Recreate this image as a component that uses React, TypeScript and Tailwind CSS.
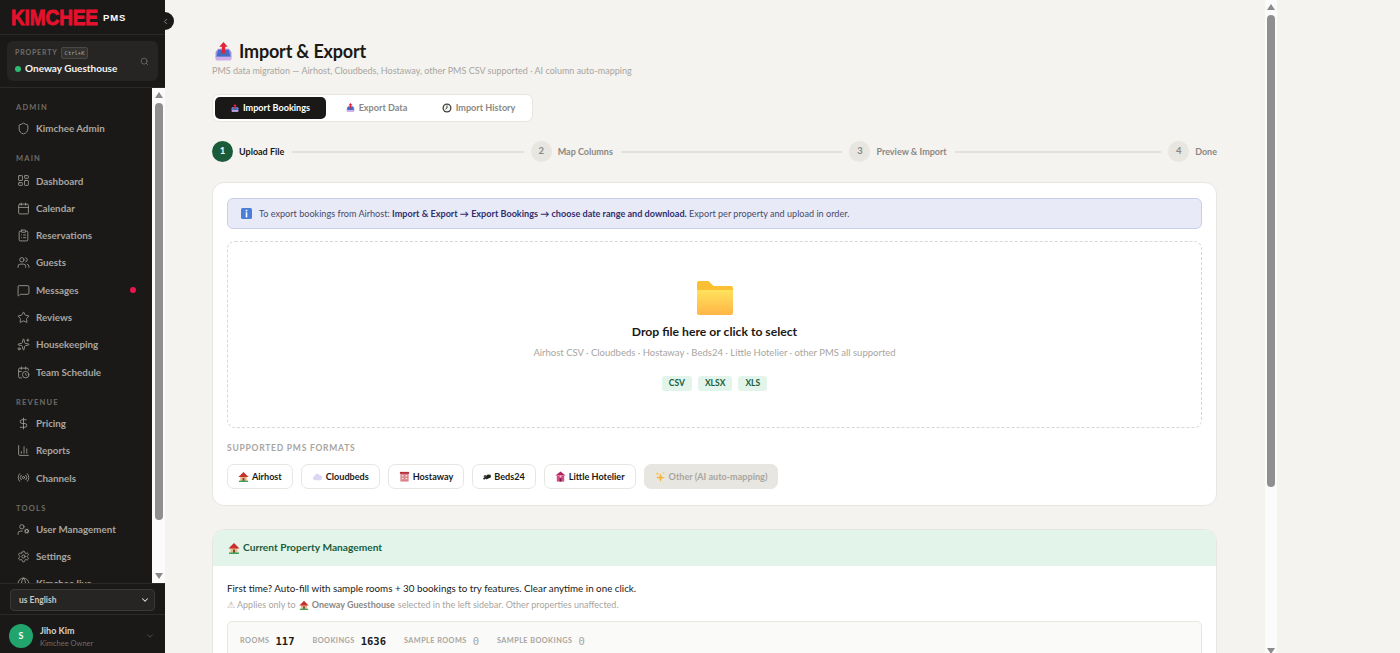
import type { ReactNode } from "react";
import {
  CalendarClock,
  Calendar,
  ChartColumn,
  ChevronDown,
  ChevronLeft,
  ClipboardList,
  DollarSign,
  Globe,
  LayoutDashboard,
  MessageSquare,
  Radio,
  Search,
  Settings,
  Shield,
  Sparkles,
  Star,
  UserCog,
  Users,
} from "lucide-react";

const FONT = "font-['Lato','Noto_Sans',sans-serif]";

function OutboxEmoji({ size = 18 }: { size?: number }) {
  return (
    <svg width={size} height={size} viewBox="0 0 18 18" className="shrink-0">
      <path d="M1.500 9.500 4 6.500h10l2.500 3V15a2 2 0 0 1-2 2h-11a2 2 0 0 1-2-2z" fill="#9a8fdd" />
      <path d="M4 7.500h10L15.500 14h-13z" fill="#3f6fc4" />
      <path d="M1.500 14h15v2a1.500 1.500 0 0 1-1.500 1.500H3A1.500 1.500 0 0 1 1.500 16z" fill="#cdaeea" />
      <path d="M9 0 13 4.500h-2.400V11H7.400V4.500H5z" fill="#e0243c" />
    </svg>
  );
}

function HouseEmoji({ size = 11 }: { size?: number }) {
  return (
    <svg width={size} height={size} viewBox="0 0 12 12" className="shrink-0">
      <rect x="2.500" y="6" width="7" height="5" fill="#e8b98c" />
      <rect x="5" y="7.500" width="2" height="3.500" fill="#7a4a2a" />
      <path d="M6 1 .5 6.500h11z" fill="#c9302c" />
      <rect x="1" y="10.500" width="10" height="1.500" fill="#3fa45b" />
    </svg>
  );
}

function CloudEmoji() {
  return (
    <svg width="11" height="11" viewBox="0 0 12 12" className="shrink-0">
      <path d="M3 10a2.300 2.300 0 0 1-.3-4.500 3 3 0 0 1 5.700-.8A2.700 2.700 0 0 1 9.300 10z" fill="#dcd6f2" />
    </svg>
  );
}

function HotelEmoji() {
  return (
    <svg width="11" height="11" viewBox="0 0 12 12" className="shrink-0">
      <rect x="1.500" y="1" width="9" height="10.500" fill="#d9828a" />
      <rect x="1" y="1" width="10" height="2" fill="#b5303c" />
      <rect x="3" y="4.500" width="2" height="1.500" fill="#f6e3d8" />
      <rect x="7" y="4.500" width="2" height="1.500" fill="#f6e3d8" />
      <rect x="3" y="7.500" width="2" height="1.500" fill="#f6e3d8" />
      <rect x="7" y="7.500" width="2" height="1.500" fill="#f6e3d8" />
    </svg>
  );
}

function BedEmoji() {
  return (
    <svg width="8" height="11" viewBox="0 0 12 16" className="shrink-0">
      <path d="M0 11 7 5l4.500.5L12 9l-7 3.500L4.500 11 1.500 13z" fill="#22221f" />
      <circle cx="3" cy="7.500" r="1.800" fill="#4a4a46" />
    </svg>
  );
}

function LoveHotelEmoji() {
  return (
    <svg width="11" height="11" viewBox="0 0 12 12" className="shrink-0">
      <path d="M6 .5 11.500 5H.5z" fill="#b3235f" />
      <rect x="2" y="5" width="8" height="6.500" fill="#d84a86" />
      <rect x="5" y="8" width="2" height="3.500" fill="#6e2346" />
      <circle cx="6" cy="6" r="1" fill="#ffd0e0" />
    </svg>
  );
}

function SparklesEmoji() {
  return (
    <svg width="11" height="11" viewBox="0 0 12 12" className="shrink-0">
      <path d="M6 2.500 7.200 6 11 7.200 7.200 8.400 6 12 4.800 8.400 1 7.200 4.800 6z" fill="#f3b93f" />
      <path d="M2.500 .5 3.200 2.300 5 3 3.200 3.700 2.500 5.500 1.800 3.700 0 3 1.800 2.300z" fill="#f7cf6b" />
      <path d="M9.500 0 10 1.500 11.500 2 10 2.500 9.500 4 9 2.500 7.500 2 9 1.500z" fill="#f7cf6b" />
    </svg>
  );
}

function HistoryEmoji() {
  return (
    <svg width="10" height="10" viewBox="0 0 10 10" className="shrink-0">
      <circle cx="5" cy="5" r="4.500" fill="#44423f" />
      <circle cx="5" cy="5" r="3.200" fill="#f4f3ef" />
      <path d="M5 2.500V5L3.500 6.200" stroke="#44423f" strokeWidth="1" fill="none" />
    </svg>
  );
}

function InfoEmoji() {
  return (
    <svg width="11" height="11" viewBox="0 0 11 11" className="shrink-0">
      <rect width="11" height="11" rx="1.500" fill="#4a7fd9" />
      <rect x="4.700" y="1.800" width="1.600" height="1.600" fill="#fff" />
      <rect x="4.700" y="4.300" width="1.600" height="5" fill="#fff" />
    </svg>
  );
}

function FolderEmoji() {
  return (
    <svg width="38" height="36" viewBox="0 0 38 36" className="shrink-0">
      <defs>
        <linearGradient id="folder-front" x1="0" y1="0" x2="0" y2="1">
          <stop offset="0" stopColor="#ffe25c" />
          <stop offset="1" stopColor="#ffb547" />
        </linearGradient>
      </defs>
      <path d="M1 3a2 2 0 0 1 2-2h9.500l5 5H35a2 2 0 0 1 2 2v6H1z" fill="#fbbf34" />
      <path d="M1 10h36v23a2 2 0 0 1-2 2H3a2 2 0 0 1-2-2z" fill="url(#folder-front)" />
    </svg>
  );
}

function ScrollColumn({ thumbTop, thumbHeight, width, arrowBottom }: { thumbTop: string; thumbHeight: string; width: string; arrowBottom: string }) {
  return (
    <div className={`${width} bg-[#fbfbfb] shrink-0 h-full flex flex-col items-center`}>
      <div className="w-0 h-0 mt-[4px] border-x-[4.500px] border-x-transparent border-b-[6px] border-b-[#8a8a8a]" />
      <div className={`${thumbTop} ${thumbHeight} w-[8px] rounded-full bg-[#8f8f8f]`} />
      <div className="flex-1" />
      <div className={`${arrowBottom} w-0 h-0 border-x-[4.500px] border-x-transparent border-t-[6px] border-t-[#8a8a8a]`} />
    </div>
  );
}

function SectionLabel({ children, className }: { children: ReactNode; className: string }) {
  return <div className={`${className} pl-[16px] text-[7.500px] leading-[10px] font-bold tracking-[0.16em] text-[#6e6c68]`}>{children}</div>;
}

function NavItem({ icon, label, dot }: { icon: ReactNode; label: string; dot?: boolean }) {
  return (
    <div className="h-[27.300px] flex items-center pl-[17px] pr-[16px] text-[#a8a5a0]">
      <span className="w-[19px] shrink-0 flex">{icon}</span>
      <span className="text-[9.800px] font-bold whitespace-nowrap">{label}</span>
      {dot && <span className="ml-auto w-[6px] h-[6px] rounded-full bg-[#e8174f]" />}
    </div>
  );
}

function Sidebar() {
  const ic = { size: 13, strokeWidth: 1.5 };
  return (
    <aside className="relative w-[165px] shrink-0 h-full bg-[#1a1917] flex flex-col">
      <div className="h-[35px] shrink-0 flex items-center pl-[11px] gap-[5px] border-b border-[#2b2a27]">
        <span className="inline-block scale-y-[1.12] font-['Liberation_Sans',sans-serif] font-bold text-[19px] leading-none tracking-[-0.1px] text-[#e8112d] [-webkit-text-stroke:0.7px_#e8112d]">KIMCHEE</span>
        <span className="font-['Liberation_Sans',sans-serif] font-bold text-[9.500px] tracking-[0.1em] text-white mt-[2px]">PMS</span>
      </div>
      <div className="h-[53px] shrink-0 px-[7px] pt-[6px] border-b border-[#2b2a27]">
        <div className="h-[40px] rounded-[6px] bg-[#262523] pl-[8px] pr-[9px] flex items-center justify-between">
          <div>
            <div className="flex items-center gap-[3px] h-[13px]">
              <span className="text-[7px] font-bold tracking-[0.12em] text-[#6e6c68]">PROPERTY</span>
              <span className="rounded-[2px] border border-[#4a4845] bg-[#33322f] px-[3px] font-['DejaVu_Sans_Mono',monospace] text-[5.500px] leading-[10px] text-[#a8a5a0]">Ctrl+K</span>
            </div>
            <div className="flex items-center gap-[4px] mt-[2px]">
              <span className="w-[6px] h-[6px] rounded-full bg-[#2dbb73]" />
              <span className="text-[10px] font-bold text-[#f5f4f0] whitespace-nowrap">Oneway Guesthouse</span>
            </div>
          </div>
          <Search size={9} strokeWidth={1.5} className="text-[#8a8884]" />
        </div>
      </div>
      <div className="flex-1 min-h-0 flex">
        <nav className="flex-1 min-w-0 overflow-hidden">
          <SectionLabel className="mt-[15px]">ADMIN</SectionLabel>
          <div className="mt-[2px]"><NavItem icon={<Shield {...ic} />} label="Kimchee Admin" /></div>
          <SectionLabel className="mt-[12px]">MAIN</SectionLabel>
          <div className="mt-[3px]">
            <NavItem icon={<LayoutDashboard {...ic} />} label="Dashboard" />
            <NavItem icon={<Calendar {...ic} />} label="Calendar" />
            <NavItem icon={<ClipboardList {...ic} />} label="Reservations" />
            <NavItem icon={<Users {...ic} />} label="Guests" />
            <NavItem icon={<MessageSquare {...ic} />} label="Messages" dot />
            <NavItem icon={<Star {...ic} />} label="Reviews" />
            <NavItem icon={<Sparkles {...ic} />} label="Housekeeping" />
            <NavItem icon={<CalendarClock {...ic} />} label="Team Schedule" />
          </div>
          <SectionLabel className="mt-[12px]">REVENUE</SectionLabel>
          <div className="mt-[2px]">
            <NavItem icon={<DollarSign {...ic} />} label="Pricing" />
            <NavItem icon={<ChartColumn {...ic} />} label="Reports" />
            <NavItem icon={<Radio {...ic} />} label="Channels" />
          </div>
          <SectionLabel className="mt-[12px]">TOOLS</SectionLabel>
          <div className="mt-[2px]">
            <NavItem icon={<UserCog {...ic} />} label="User Management" />
            <NavItem icon={<Settings {...ic} />} label="Settings" />
            <NavItem icon={<Globe {...ic} />} label="Kimchee live" />
          </div>
        </nav>
        <ScrollColumn width="w-[13px]" thumbTop="mt-[5px]" thumbHeight="h-[417px]" arrowBottom="mb-[4px]" />
      </div>
      <div className="h-[31px] shrink-0 px-[10px] pt-[5px] border-t border-[#2b2a27]">
        <div className="h-[22px] rounded-[4px] border border-[#3a3936] bg-[#262523] pl-[8px] pr-[4px] flex items-center justify-between">
          <span className="text-[8.500px] font-bold text-[#c9c6c0]">us English</span>
          <ChevronDown size={10} strokeWidth={2.500} className="text-[#e5e3de]" />
        </div>
      </div>
      <div className="h-[39px] shrink-0 pl-[9px] pr-[10px] pt-[4px] flex items-center border-t border-[#2b2a27]">
        <div className="w-[24px] h-[24px] rounded-full bg-[#22a56c] flex items-center justify-center text-[9px] font-bold text-white">S</div>
        <div className="ml-[7px]">
          <div className="text-[9px] font-bold leading-[14px] text-[#d5d2cc]">Jiho Kim</div>
          <div className="text-[7.500px] leading-[11px] text-[#6e6c68]">Kimchee Owner</div>
        </div>
        <ChevronDown size={10} strokeWidth={1.500} className="ml-auto text-[#6e6c68]" />
      </div>
      <div className="absolute top-[12px] -right-[9px] w-[18px] h-[18px] rounded-full bg-[#1a1917] flex items-center justify-center">
        <ChevronLeft size={9} strokeWidth={2.500} className="text-[#8a8884]" />
      </div>
    </aside>
  );
}

function Step({ n, label, active, last }: { n: number; label: string; active?: boolean; last?: boolean }) {
  return (
    <div className={`flex items-center ${last ? "shrink-0" : "flex-1 min-w-0"}`}>
      <div className={`w-[21px] h-[21px] shrink-0 rounded-full flex items-center justify-center text-[9.500px] font-bold ${active ? "bg-[#1a5c3a] text-white" : "bg-[#e8e6e1] text-[#8a8884]"}`}>{n}</div>
      <span className={`ml-[6px] text-[9px] font-bold whitespace-nowrap ${active ? "text-[#1a1917]" : "text-[#8a8884]"}`}>{label}</span>
      {!last && <div className="flex-1 h-[2px] bg-[#e3e1dc] ml-[8px] mr-[7px]" />}
    </div>
  );
}

function PmsChip({ icon, label, muted }: { icon: ReactNode; label: string; muted?: boolean }) {
  return (
    <div className={`h-[25px] rounded-[7px] px-[10px] flex items-center gap-[3px] text-[9.100px] font-bold border ${muted ? "bg-[#e8e6e1] border-[#e8e6e1] text-[#a8a5a0]" : "bg-white border-[#e8e6e1] text-[#1a1917]"}`}>
      {icon}
      {label}
    </div>
  );
}

function FileChip({ label }: { label: string }) {
  return <span className="h-[15px] rounded-[3px] bg-[#e3f5ea] px-[7px] flex items-center text-[8.500px] font-bold text-[#1a5c3a]">{label}</span>;
}

function Stat({ label, value, muted }: { label: string; value: string; muted?: boolean }) {
  return (
    <div className="flex items-center gap-[6px]">
      <span className="text-[7.300px] font-bold tracking-[0.06em] text-[#a8a5a0]">{label}</span>
      <span className={`font-['DejaVu_Sans_Mono',monospace] text-[10.500px] ${muted ? "text-[#a8a5a0]" : "font-bold text-[#1a1917]"}`}>{value}</span>
    </div>
  );
}

function Main() {
  return (
    <main className="w-[1100px] shrink-0 h-full overflow-hidden pl-[47px] pr-[48px] pt-[41px]">
      <div className="flex items-center gap-[6px] pl-[2px] h-[21px]">
        <OutboxEmoji size={19} />
        <h1 className="text-[18px] font-bold tracking-[-0.01em] text-[#1a1917]">Import &amp; Export</h1>
      </div>
      <p className="mt-[3px] text-[9px] leading-[12px] text-[#a8a5a0] whitespace-nowrap">PMS data migration — Airhost, Cloudbeds, Hostaway, other PMS CSV supported · AI column auto-mapping</p>

      <div className="mt-[17px] w-[321px] h-[28px] rounded-[7px] bg-white border border-[#e8e6e1] p-[2px] flex items-center">
        <div className="w-[111px] h-[22px] rounded-[5px] bg-[#1a1917] flex items-center justify-center gap-[4px] text-[9.100px] font-bold text-white">
          <OutboxEmoji size={8} />
          Import Bookings
        </div>
        <div className="w-[101px] flex items-center justify-center gap-[4px] text-[9.100px] font-bold text-[#8a8884]">
          <OutboxEmoji size={9} />
          Export Data
        </div>
        <div className="flex-1 flex items-center justify-center gap-[4px] text-[9.100px] font-bold text-[#8a8884]">
          <HistoryEmoji />
          Import History
        </div>
      </div>

      <div className="mt-[19px] flex items-center h-[21px]">
        <Step n={1} label="Upload File" active />
        <Step n={2} label="Map Columns" />
        <Step n={3} label="Preview & Import" />
        <Step n={4} label="Done" last />
      </div>

      <section className="mt-[20px] h-[324px] rounded-[12px] bg-white border border-[#e8e6e1] px-[14px] pt-[15px]">
        <div className="h-[31px] rounded-[6px] bg-[#e8ebf7] border border-[#c9cfe8] pl-[13px] flex items-center gap-[7px] text-[9.100px] text-[#4a4a6a] whitespace-nowrap">
          <InfoEmoji />
          <span>
            To export bookings from Airhost: <b className="text-[#312e6e]">Import &amp; Export → Export Bookings → choose date range and download.</b> Export per property and upload in order.
          </span>
        </div>
        <div className="mt-[12px] h-[187px] rounded-[8px] border border-dashed border-[#d9d7d2] flex flex-col items-center pt-[38px]">
          <FolderEmoji />
          <div className="mt-[7px] text-[12.200px] leading-[18px] font-bold text-[#1a1917]">Drop file here or click to select</div>
          <div className="mt-[6px] text-[9.500px] leading-[12px] text-[#a8a5a0] whitespace-nowrap">Airhost CSV · Cloudbeds · Hostaway · Beds24 · Little Hotelier · other PMS all supported</div>
          <div className="mt-[17px] flex gap-[6px]">
            <FileChip label="CSV" />
            <FileChip label="XLSX" />
            <FileChip label="XLS" />
          </div>
        </div>
        <div className="mt-[14px] text-[8.500px] leading-[12px] font-bold tracking-[0.09em] text-[#a8a5a0]">SUPPORTED PMS FORMATS</div>
        <div className="mt-[10px] flex gap-[8px]">
          <PmsChip icon={<HouseEmoji />} label="Airhost" />
          <PmsChip icon={<CloudEmoji />} label="Cloudbeds" />
          <PmsChip icon={<HotelEmoji />} label="Hostaway" />
          <PmsChip icon={<BedEmoji />} label="Beds24" />
          <PmsChip icon={<LoveHotelEmoji />} label="Little Hotelier" />
          <PmsChip icon={<SparklesEmoji />} label="Other (AI auto-mapping)" muted />
        </div>
      </section>

      <section className="mt-[23px] rounded-t-[12px] bg-white border border-[#e8e6e1] overflow-hidden">
        <div className="h-[36px] bg-[#e3f5ea] pl-[15px] flex items-center gap-[3px] text-[10.200px] font-bold text-[#1a5c3a]">
          <HouseEmoji size={12} />
          Current Property Management
        </div>
        <div className="px-[14px] pt-[15px] pb-[40px]">
          <p className="text-[9.800px] leading-[14px] text-[#1a1917]">First time? Auto-fill with sample rooms + 30 bookings to try features. Clear anytime in one click.</p>
          <p className="mt-[3px] flex items-center gap-[3px] text-[9px] leading-[13px] text-[#a8a5a0]">
            ⚠ Applies only to <HouseEmoji size={10} /> <b className="text-[#8a8884]">Oneway Guesthouse</b> selected in the left sidebar. Other properties unaffected.
          </p>
          <div className="mt-[10px] h-[60px] rounded-[5px] bg-[#fafaf8] border border-[#e8e6e1] pl-[12px] pt-[12px] flex items-start gap-[18px]">
            <Stat label="ROOMS" value="117" />
            <Stat label="BOOKINGS" value="1636" />
            <Stat label="SAMPLE ROOMS" value="0" muted />
            <Stat label="SAMPLE BOOKINGS" value="0" muted />
          </div>
        </div>
      </section>
    </main>
  );
}

export default function App() {
  return (
    <div className={`${FONT} h-screen w-full overflow-hidden flex bg-[#f4f3ef]`}>
      <Sidebar />
      <Main />
      <ScrollColumn width="w-[12px]" thumbTop="mt-[5px]" thumbHeight="h-[472px]" arrowBottom="-mb-[1px]" />
    </div>
  );
}
